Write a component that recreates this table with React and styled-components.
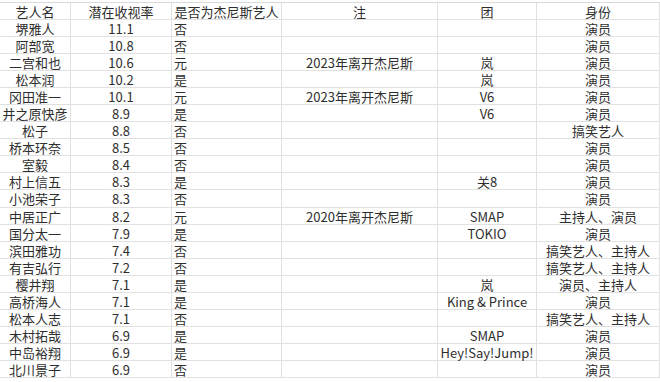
import React from 'react';
import styled, { createGlobalStyle } from 'styled-components';

const Global = createGlobalStyle`
  html, body {
    margin: 0;
    padding: 0;
    background: #fff;
  }
`;

const Sheet = styled.div`
  padding-top: 2px;
  width: 660px;
  height: 382px;
  overflow: hidden;
  font-family: 'Noto Sans CJK SC', sans-serif;
  font-size: 13px;
  color: #2e2e2e;
`;

const Grid = styled.div`
  display: grid;
  grid-template-columns: 71px 101px 110px 156px 99px 123px;
  grid-template-rows: 17px;
  grid-auto-rows: 17.05px;
  border-top: 1px solid #d9d9d9;
`;

const Cell = styled.div`
  box-sizing: border-box;
  display: flex;
  align-items: center;
  justify-content: ${(p) => (p.left ? 'flex-start' : 'center')};
  padding-left: ${(p) => (p.left ? '2px' : '0')};
  padding-top: 1px;
  line-height: 15px;
  border-bottom: 1px solid #e1e1e1;
  border-right: 1px solid #e1e1e1;
  white-space: nowrap;
`;

const header = ['艺人名', '潜在收视率', '是否为杰尼斯艺人', '注', '团', '身份'];

const rows = [
  ['堺雅人', '11.1', '否', '', '', '演员'],
  ['阿部宽', '10.8', '否', '', '', '演员'],
  ['二宫和也', '10.6', '元', '2023年离开杰尼斯', '岚', '演员'],
  ['松本润', '10.2', '是', '', '岚', '演员'],
  ['冈田准一', '10.1', '元', '2023年离开杰尼斯', 'V6', '演员'],
  ['井之原快彦', '8.9', '是', '', 'V6', '演员'],
  ['松子', '8.8', '否', '', '', '搞笑艺人'],
  ['桥本环奈', '8.5', '否', '', '', '演员'],
  ['室毅', '8.4', '否', '', '', '演员'],
  ['村上信五', '8.3', '是', '', '关8', '演员'],
  ['小池荣子', '8.3', '否', '', '', '演员'],
  ['中居正广', '8.2', '元', '2020年离开杰尼斯', 'SMAP', '主持人、演员'],
  ['国分太一', '7.9', '是', '', 'TOKIO', '演员'],
  ['滨田雅功', '7.4', '否', '', '', '搞笑艺人、主持人'],
  ['有吉弘行', '7.2', '否', '', '', '搞笑艺人、主持人'],
  ['樱井翔', '7.1', '是', '', '岚', '演员、主持人'],
  ['高桥海人', '7.1', '是', '', 'King & Prince', '演员'],
  ['松本人志', '7.1', '否', '', '', '搞笑艺人、主持人'],
  ['木村拓哉', '6.9', '是', '', 'SMAP', '演员'],
  ['中岛裕翔', '6.9', '是', '', 'Hey!Say!Jump!', '演员'],
  ['北川景子', '6.9', '否', '', '', '演员'],
];

export default function App() {
  return (
    <Sheet>
      <Global />
      <Grid>
        {header.map((h) => (
          <Cell key={h}>{h}</Cell>
        ))}
        {rows.map((r, i) =>
          r.map((v, j) => (
            <Cell key={`${i}-${j}`} left={j === 2}>
              {v}
            </Cell>
          ))
        )}
      </Grid>
    </Sheet>
  );
}
